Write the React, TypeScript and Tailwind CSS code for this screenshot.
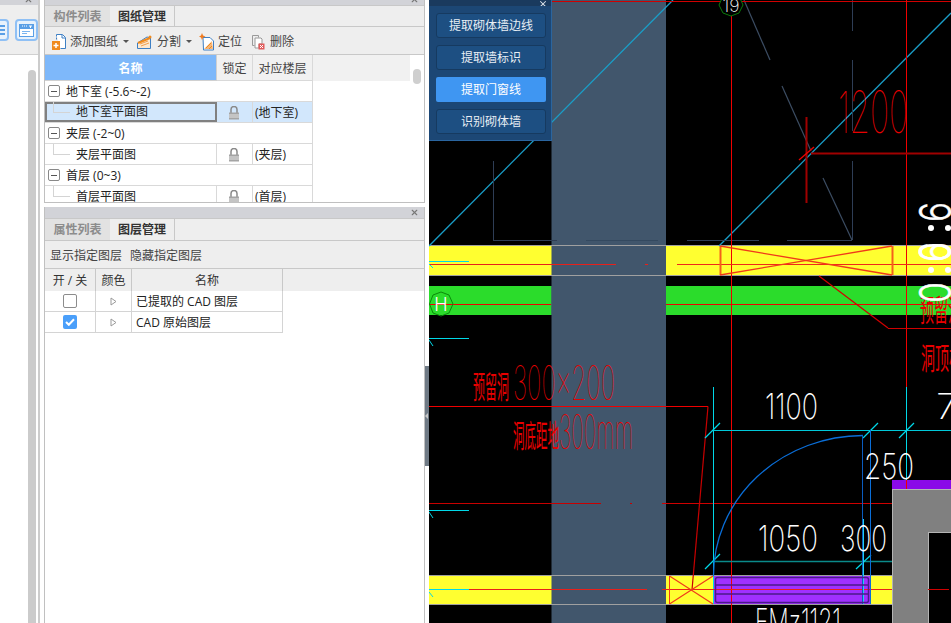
import { X } from "lucide-react";

const font = "font-['Open_Sans','Noto_Sans_CJK_SC',sans-serif]";
const zhFont = "font-['Noto_Sans_CJK_SC',sans-serif]";

// CAD line work: x1, y1, x2, y2, colour, width
const red = "#f00000";
const cyan = "#00d8e8";
const slate = "#2e3d55";
const lines: [number, number, number, number, string, number?][] = [
  // diagonals
  [429, 246, 673, 0, "#1a9ec8", 1.3],
  [719, 246, 951, 13, "#1a9ec8", 1.3],
  // slate walls
  [493, 161, 493, 240, slate, 1],
  [493, 240, 557, 240, slate, 1],
  [586, 240, 658, 240, "#34495f", 1],
  [687, 240, 759, 240, slate, 1],
  [787, 240, 852, 240, slate, 1],
  [852, 0, 852, 31, slate, 1],
  [852, 60, 852, 131, slate, 1],
  [852, 161, 852, 240, slate, 1],
  [744, 0, 770, 60, "#3c4d63", 1.2],
  [782, 86, 811, 151, "#3c4d63", 1.2],
  [823, 178, 852, 240, "#3c4d63", 1.2],
  // top reds
  [552, 1, 951, 1, "#d00000"],
  [731, 0, 731, 623, red],
  [906, 0, 906, 387, red],
  [811, 153, 951, 153, "#a00000", 2],
  [806, 117, 806, 203, "#a00000", 2],
  [799, 160, 814, 147, red, 1.3],
  // top band
  [429, 264, 616, 264, "#e8201a"],
  [645, 264, 648, 264, "#e8201a"],
  [677, 264, 951, 264, "#f02818"],
  [720, 246, 720, 275, "#f4601a", 2],
  [892, 246, 892, 275, "#f4601a", 2],
  [720, 246, 892, 275, "#f03a1a", 1.3],
  [720, 275, 892, 246, "#f03a1a", 1.3],
  [429, 261, 469, 261, cyan],
  [429, 264, 433, 268, cyan],
  // green band
  [429, 304, 551, 304, red],
  [666, 304, 951, 304, red],
  // leader to right
  [819, 276, 888, 328, "#d00000", 1.2],
  [888, 328, 951, 328, "#d00000"],
  // left ticks
  [429, 338, 469, 338, cyan],
  [429, 340, 433, 346, cyan],
  [429, 510, 469, 510, cyan],
  [429, 512, 433, 518, cyan],
  // hole leader
  [429, 406, 708, 406, red],
  [708, 406.5, 692, 590, "#c80000", 1.2],
  [429, 503, 601, 503, "#c80000"],
  [630, 503, 632, 503, "#c80000"],
  [662, 503, 892, 503, "#d00000"],
  // dimensions
  [713, 387, 713, 604, cyan],
  [906, 387, 906, 480, cyan],
  [713, 430, 951, 430, "#00c8d8"],
  [705, 438, 720, 423, cyan, 1.2],
  [863, 438, 878, 423, cyan, 1.2],
  [899, 438, 914, 423, cyan, 1.2],
  [713, 561, 892, 561, "#0a8a8a", 1.5],
  [705, 569, 720, 554, cyan, 1.2],
  [856, 569, 871, 555, cyan, 1.2],
  [906, 480, 906, 489, red],
  // bottom band
  [429, 589, 469, 589, cyan],
  [429, 592, 433, 597, cyan],
  [469, 589, 647, 589, "#e8201a"],
  [662, 589, 892, 589, "#e8201a"],
  [669, 576, 669, 604, "#f03a1a"],
  [669.5, 576, 713, 604, "#f03a1a", 1.2],
  [669.5, 604, 713, 576, "#f03a1a", 1.2],
  [928, 589, 949, 589, "#d00000"],
];

// keep straight lines on the pixel grid
const snap = (v: number) => (Number.isInteger(v) ? v + 0.5 : v);

// thin stretched digits, the way the CAD fonts draw them
function CadText({
  x,
  y,
  w,
  size,
  fill,
  children,
}: {
  x: number;
  y: number;
  w: number;
  size: number;
  fill: string;
  children: string;
}) {
  return (
    <text
      x={x}
      y={y}
      fontSize={size}
      fill={fill}
      textLength={w}
      lengthAdjust="spacingAndGlyphs"
      className={
        fill === "#fff"
          ? "font-['Inter',sans-serif] font-extralight"
          : "font-['Inter',sans-serif] font-thin"
      }
    >
      {children}
    </text>
  );
}

function CadZh({
  x,
  y,
  w,
  size,
  children,
}: {
  x: number;
  y: number;
  w: number;
  size: number;
  children: string;
}) {
  return (
    <text
      x={x}
      y={y}
      fontSize={size}
      fill="#e80000"
      textLength={w}
      lengthAdjust="spacingAndGlyphs"
      className={zhFont}
    >
      {children}
    </text>
  );
}

function Elevation({ y, w, children }: { y: number; w: number; children: string }) {
  return (
    <g transform={`translate(951 ${y}) rotate(-90)`}>
      <text
        fontSize="44"
        fill="#fff"
        stroke="#fff"
        strokeWidth="0.5"
        textLength={w}
        lengthAdjust="spacingAndGlyphs"
        className="font-['Inter',sans-serif] font-light"
      >
        {children}
      </text>
    </g>
  );
}

function CadDrawing() {
  return (
    <svg viewBox="429 0 522 623" className="block h-[623px] w-[522px]">
      <rect x="429" y="246" width="522" height="29.5" fill="#ffff30" />
      <rect x="429" y="286" width="522" height="29" fill="#2bdc2b" />
      <rect x="429" y="576" width="463" height="28" fill="#ffff30" />
      <rect x="551.5" y="0" width="114.5" height="623" fill="#41566c" />
      <rect x="713" y="576" width="158" height="28" fill="#a030ff" />
      {[245.5, 275.5, 575.5, 604.5].map((y) => (
        <line key={y} x1="429" x2={y < 300 ? 951 : 892} y1={y} y2={y} stroke="#a0a0a0" />
      ))}
      <rect x="551.5" y="286" width="114.5" height="29" fill="#41566c" />

      {/* gray column */}
      <rect x="892" y="480" width="59" height="9" fill="#8a0ae8" />
      <rect x="892.5" y="489.5" width="60" height="140" fill="#808080" stroke="#b4b4b4" />
      <rect x="928.5" y="532.5" width="30" height="100" fill="#000" stroke="#b4b4b4" />

      {lines.map(([x1, y1, x2, y2, c, w], i) => (
        <line
          key={i}
          x1={x1 === x2 ? snap(x1) : x1}
          y1={y1 === y2 ? snap(y1) : y1}
          x2={x1 === x2 ? snap(x2) : x2}
          y2={y1 === y2 ? snap(y2) : y2}
          stroke={c}
          strokeWidth={w ?? 1}
        />
      ))}

      {/* door */}
      <path d="M713.5 576 A150 140 0 0 1 863 435.5" fill="none" stroke="#0a6ed8" strokeWidth="1.3" />
      <line x1="862.5" y1="435.5" x2="862.5" y2="604" stroke="#0a5cc0" />
      <line x1="870.5" y1="430" x2="870.5" y2="604" stroke="#0a6ed8" />
      <line x1="863.5" y1="519" x2="863.5" y2="604" stroke="#20d0f0" />
      <rect x="715.5" y="577.5" width="153" height="25" rx="2" fill="none" stroke="#4a1a8a" strokeWidth="1.5" />
      <line x1="715" y1="585" x2="869" y2="585" stroke="#4a1a8a" strokeWidth="1.5" />
      <line x1="715" y1="594" x2="869" y2="594" stroke="#4a1a8a" strokeWidth="1.5" />

      {/* axis bubbles */}
      <polygon points="731,-7 739,-4 743,5 739,13 731,16 723,13 719,5 723,-4" fill="#000" stroke="#0a7a0a" />
      <text
        x="722.500"
        y="12"
        fontSize="18"
        fill="#fff"
        textLength="17"
        lengthAdjust="spacingAndGlyphs"
        className="font-['Inter',sans-serif] font-extralight"
      >
        19
      </text>
      <polygon points="441,292 449,295 453,304 449,313 441,316 433,313 429.500,304 433,295" fill="none" stroke="#0a8a0a" />
      <text x="441" y="311" fontSize="18" fill="#fff" textAnchor="middle" className="font-['Inter',sans-serif] font-light">
        H
      </text>

      <CadText x={838} y={133} w={70} size={58} fill="#e80000">1200</CadText>
      <CadText x={513} y={400} w={102} size={48} fill="#e80000">300x200</CadText>
      <CadText x={559} y={449} w={74} size={48} fill="#e80000">300mm</CadText>
      <CadText x={765} y={419} w={53} size={35} fill="#fff">1100</CadText>
      <CadText x={864} y={479} w={50} size={35} fill="#fff">250</CadText>
      <CadText x={758} y={551} w={60} size={35} fill="#fff">1050</CadText>
      <CadText x={840} y={551} w={47} size={35} fill="#fff">300</CadText>
      <CadText x={936} y={419} w={22} size={35} fill="#fff">7</CadText>
      <CadText x={755} y={634} w={86} size={35} fill="#fff">FMz1121</CadText>

      <CadZh x={473} y={398} w={36} size={31}>预留洞</CadZh>
      <CadZh x={513} y={447} w={46} size={31}>洞底距地</CadZh>
      <CadZh x={920} y={321} w={42} size={30}>预留洞</CadZh>
      <CadZh x={921} y={369} w={42} size={30}>洞顶标</CadZh>

      {/* elevation text running up the right edge */}
      <Elevation y={303} w={21}>0</Elevation>
      <Elevation y={262} w={20}>0</Elevation>
      <Elevation y={262} w={20}>6</Elevation>
      <Elevation y={222} w={20}>6</Elevation>
      {[[931, 270], [948, 270], [931, 228], [948, 228]].map(([cx, cy]) => (
        <circle key={`${cx}-${cy}`} cx={cx} cy={cy} r="3" fill="#fff" />
      ))}
    </svg>
  );
}

const wallButtons = ["提取砌体墙边线", "提取墙标识", "提取门窗线", "识别砌体墙"];

function WallPanel() {
  return (
    <div className="absolute left-0 top-0 w-[123px] border-b border-r border-[#2a659f] bg-[#1c4775]">
      <div className="flex h-[6px] items-end justify-end overflow-hidden bg-[#1a3a5e] pr-[3px]">
        <X size={10} strokeWidth={2.5} className="shrink-0 translate-y-[3px] text-[#d8e0e8]" />
      </div>
      <div className="flex flex-col gap-[7px] pb-[6px] pl-[7px] pr-[5px] pt-[7px]">
        {wallButtons.map((label) => (
          <div
            key={label}
            className={
              label === "提取门窗线"
                ? "flex h-[25px] items-center justify-center rounded-[2px] bg-[#3f96f2] pt-[1px] text-xs text-white"
                : "flex h-[25px] items-center justify-center rounded-[3px] border border-[#163a60] bg-[#1d4f82] pt-[1px] text-xs text-[#e8eef4]"
            }
          >
            {label}
          </div>
        ))}
      </div>
    </div>
  );
}

function AddIcon() {
  return (
    <svg width="16" height="18" viewBox="0 0 16 18" className="shrink-0">
      <path d="M5.500 1.500h6l3 3v11h-5" fill="#fff" stroke="#3d7fc4" />
      <path d="M5.500 1.500v6" stroke="#3d7fc4" strokeDasharray="2 1" />
      <path d="M11 2v3h3" fill="none" stroke="#3d7fc4" />
      <rect x="1" y="8" width="8" height="9" fill="#f08a1e" />
      <path d="M5 10v5M2.500 12.500h5" stroke="#fff" strokeWidth="1.500" />
    </svg>
  );
}

function SplitIcon() {
  return (
    <svg width="16" height="16" viewBox="0 0 16 16" className="block shrink-0">
      <path d="M1.500 9 11 3l3.500 1v10.500h-13z" fill="#fde8cf" stroke="#3d7fc4" />
      <path d="M2 9l12-5" stroke="#f08a1e" strokeWidth="2" />
      <path d="M4 10l8-3M5 12l8-3" stroke="#f0a050" />
      <circle cx="14" cy="3" r="1.500" fill="#f08a1e" />
    </svg>
  );
}

function LocateIcon() {
  return (
    <svg width="16" height="18" viewBox="0 0 16 18" className="block shrink-0">
      <path d="M4 4.500h7l3.500 3.500v9h-10z" fill="#fff" stroke="#3d7fc4" />
      <path d="M5 16l8-8 1 8z" fill="#f6b77a" />
      <path d="M7 15l5-5M10 16l3-3" stroke="#f08a1e" />
      <path d="M3 0l1 2.500 2.500 1-2.500 1L3 7 2 4.500l-2-1 2-1z" fill="#f07a1e" />
    </svg>
  );
}

function DeleteIcon() {
  return (
    <svg width="14" height="16" viewBox="0 0 14 16" className="block shrink-0">
      <path d="M1.500 1.500h6v2M1.500 1.500v10h2" fill="none" stroke="#9a9a9a" />
      <path d="M4 4h6l1 1v5h-3v4H4z" fill="#fff" stroke="#9a9a9a" />
      <rect x="7.500" y="9.500" width="6" height="6" fill="#e25b5b" />
      <path d="M9 11l3 3M12 11l-3 3" stroke="#fff" />
    </svg>
  );
}

function Caret() {
  return <span className="ml-[5px] h-0 w-0 border-x-[3px] border-t-[3px] border-x-transparent border-t-[#555]" />;
}

function Lock() {
  return (
    <svg width="12" height="14" viewBox="0 0 12 14">
      <path d="M3 7V3.500a3 3 0 0 1 6 0V7" fill="none" stroke="#8a8a8a" strokeWidth="1.500" />
      <rect x="1" y="6.500" width="10" height="7" fill="#a4a4a4" />
      <path d="M1 9h10M1 11h10" stroke="#e4e4e4" />
    </svg>
  );
}

function PanelHeader({ height }: { height: string }) {
  return (
    <div className={`flex shrink-0 items-end justify-end overflow-hidden bg-[#d2d3d8] pr-[5px] ${height}`}>
      <X size={9} strokeWidth={3} className="mb-[1px] shrink-0 text-[#777]" />
    </div>
  );
}

function PanelTabs({ first, second, height }: { first: string; second: string; height: string }) {
  return (
    <div className={`flex shrink-0 border-y border-[#c8c8c8] bg-[#eeeeee] text-xs font-bold ${height}`}>
      <div className="flex w-[65px] items-center justify-center bg-[#e2e2e2] pt-[1px] text-[#8c8c8c]">{first}</div>
      <div className="flex w-[65px] items-center justify-center border-r border-[#c8c8c8] pt-[1px] text-[#333]">{second}</div>
    </div>
  );
}

function GroupRow({ label }: { label: string }) {
  return (
    <div className="flex h-[21px] w-[268px] items-center border-b border-r border-[#d9d9d9] text-xs text-[#222]">
      <span className="ml-[3px] flex h-[12px] w-[12px] items-center justify-center rounded-[2px] border border-[#888]">
        <span className="h-px w-[6px] bg-[#555]" />
      </span>
      <span className="ml-[6px] pt-[1px]">{label}</span>
    </div>
  );
}

function SheetRow({ label, floor, selected }: { label: string; floor: string; selected?: boolean }) {
  return (
    <div
      className={
        selected
          ? "flex h-[21px] w-[268px] border-b border-r border-[#d9d9d9] bg-[#d2e7fc] text-xs text-[#222]"
          : "flex h-[21px] w-[268px] border-b border-r border-[#d9d9d9] text-xs text-[#222]"
      }
    >
      <div
        className={
          selected
            ? "flex w-[172px] items-center border-2 border-[#808080] pl-[29px]"
            : "flex w-[172px] items-center border-r border-[#d9d9d9] pl-[31px] pt-[1px]"
        }
      >
        {label}
      </div>
      <div className="flex w-[36px] items-center justify-center border-r border-[#d9d9d9] pr-[1px] pt-[1px]">
        <Lock />
      </div>
      <div className="flex items-center pl-[2px] pt-[1px]">{floor}</div>
    </div>
  );
}

function SheetPanel() {
  return (
    <div className="flex h-[203px] shrink-0 flex-col overflow-hidden border-x border-b border-[#c0c0c0]">
      <PanelHeader height="h-[5px]" />
      <PanelTabs first="构件列表" second="图纸管理" height="h-[22px]" />
      <div className="flex h-[28px] shrink-0 items-center border-b border-[#c8c8c8] bg-[#eeeeee] pl-[6px] pt-[2px] text-xs text-[#444]">
        <AddIcon />
        <span className="ml-[3px]">添加图纸</span>
        <Caret />
        <span className="ml-[7px]">
          <SplitIcon />
        </span>
        <span className="ml-[5px]">分割</span>
        <Caret />
        <span className="ml-[7px]">
          <LocateIcon />
        </span>
        <span className="ml-[3px]">定位</span>
        <span className="ml-[9px]">
          <DeleteIcon />
        </span>
        <span className="ml-[5px]">删除</span>
      </div>
      <div className="flex min-h-0 flex-1">
        <div className="min-w-0 flex-1">
          <div className="flex h-[26px] bg-[#f1f1f1] text-xs">
            <div className="flex w-[172px] items-center justify-center border-b border-r border-[#d0d0d0] bg-[#7eb8fa] pt-[2px] font-bold text-white">
              名称
            </div>
            <div className="flex w-[36px] items-center justify-center border-b border-r border-[#d9d9d9] pt-[2px] text-[#444]">
              锁定
            </div>
            <div className="flex w-[60px] items-center justify-center border-b border-r border-[#d9d9d9] pt-[2px] text-[#444]">
              对应楼层
            </div>
          </div>
          <div className="relative">
            <GroupRow label="地下室 (-5.6~-2)" />
            <SheetRow label="地下室平面图" floor="(地下室)" selected />
            <GroupRow label="夹层 (-2~0)" />
            <SheetRow label="夹层平面图" floor="(夹层)" />
            <GroupRow label="首层 (0~3)" />
            <SheetRow label="首层平面图" floor="(首层)" />
            {[21, 63, 105].map((top) => (
              <span
                key={top}
                className="absolute left-[8px] h-[11px] w-[17px] border-b border-l border-[#d4d4d4]"
                style={{ top }}
              />
            ))}
          </div>
        </div>
        <div className="w-[14px] shrink-0 pl-[3px] pt-[14px]">
          <div className="h-[15px] w-[8px] rounded-[4px] bg-[#cfcfcf]" />
        </div>
      </div>
    </div>
  );
}

function Triangle() {
  return (
    <svg width="7" height="9" viewBox="0 0 7 9">
      <path d="M1 1l5 3.500L1 8z" fill="#fff" stroke="#9a9a9a" />
    </svg>
  );
}

function LayerRow({ label, checked }: { label: string; checked?: boolean }) {
  return (
    <div className="flex h-[21px] w-[238px] border-b border-r border-[#d4d4d4] text-xs text-[#222]">
      <div className="flex w-[51px] items-center justify-center border-r border-[#d4d4d4]">
        {checked ? (
          <span className="flex h-[14px] w-[14px] items-center justify-center rounded-[2px] bg-[#4a9ffa]">
            <svg width="10" height="8" viewBox="0 0 10 8">
              <path d="M1 4l2.800 2.800L9 1.200" fill="none" stroke="#fff" strokeWidth="2" />
            </svg>
          </span>
        ) : (
          <span className="h-[14px] w-[14px] rounded-[2px] border border-[#8c8c8c] bg-white" />
        )}
      </div>
      <div className="flex w-[36px] items-center justify-center border-r border-[#d4d4d4]">
        <Triangle />
      </div>
      <div className="flex items-center pl-[4px] pt-[1px]">{label}</div>
    </div>
  );
}

function LayerPanel() {
  return (
    <div className="flex min-h-0 flex-1 flex-col border-x border-[#c0c0c0]">
      <PanelHeader height="h-[11px]" />
      <PanelTabs first="属性列表" second="图层管理" height="h-[23px]" />
      <div className="flex h-[28px] shrink-0 items-center gap-[8px] border-b border-[#c8c8c8] bg-[#eeeeee] pl-[5px] pt-[3px] text-xs text-[#444]">
        <span>显示指定图层</span>
        <span>隐藏指定图层</span>
      </div>
      <div className="flex h-[22px] shrink-0 bg-[#eeeeee] text-xs text-[#333]">
        <div className="flex w-[51px] items-center justify-center border-r border-[#c8c8c8] pt-[2px]">开 / 关</div>
        <div className="flex w-[36px] items-center justify-center border-r border-[#c8c8c8] pt-[2px]">颜色</div>
        <div className="flex w-[151px] items-center justify-center border-r border-[#c8c8c8] pt-[2px]">名称</div>
      </div>
      <LayerRow label="已提取的 CAD 图层" />
      <LayerRow label="CAD 原始图层" checked />
    </div>
  );
}

function LeftStrip() {
  return (
    <div className="flex w-[40px] shrink-0 flex-col border-r-2 border-[#cccccc]">
      <PanelHeader height="h-[5px]" />
      <div className="flex h-[50px] shrink-0 items-center gap-[6px] border-b border-[#d0d0d0] bg-[#eeeeee] pt-[1px]">
        <div className="-ml-[13px] flex h-[22px] w-[22px] flex-col items-end justify-center gap-[2px] rounded-[4px] border-2 border-[#8fc0f5] bg-[#e8f2fc] pr-[2px]">
          <span className="h-[2px] w-[6px] bg-[#5a9fe6]" />
          <span className="h-[2px] w-[6px] bg-[#5a9fe6]" />
          <span className="h-[2px] w-[6px] bg-[#5a9fe6]" />
        </div>
        <div className="flex h-[22px] w-[23px] items-center justify-center rounded-[4px] border-2 border-[#8fc0f5] bg-[#e8f2fc]">
          <svg width="15" height="13" viewBox="0 0 15 13">
            <rect width="15" height="13" fill="#5a9fe6" />
            <rect x="1" y="5" width="13" height="7" fill="#fff" />
            <path d="M3 2h1M5 2h1M7 2h1" stroke="#fff" />
            <path d="M10 2h3M11.500 2v2" stroke="#fff" />
            <path d="M3 7.500h8M3 9.500h5" stroke="#7ab5f0" />
          </svg>
        </div>
      </div>
      <div className="flex min-h-0 flex-1 justify-end pr-[2px] pt-[15px]">
        <div className="w-[8px] rounded-t-[4px] bg-[#cbcbcb]" />
      </div>
    </div>
  );
}

export default function App() {
  return (
    <div className={`flex h-[623px] w-[951px] overflow-hidden bg-white ${font}`}>
      <LeftStrip />
      <div className="ml-[4px] flex w-[381px] shrink-0 flex-col gap-[4px]">
        <SheetPanel />
        <LayerPanel />
      </div>
      <div className="relative w-[4px] shrink-0">
        <div className="absolute left-0 top-[366px] flex h-[100px] w-[4px] items-center bg-[#6f7a85]">
          <span className="h-0 w-0 border-y-[3px] border-r-[3px] border-y-transparent border-r-[#c8c8c8]" />
        </div>
      </div>
      <div className="relative min-w-0 flex-1 overflow-hidden bg-black">
        <CadDrawing />
        <WallPanel />
      </div>
    </div>
  );
}
